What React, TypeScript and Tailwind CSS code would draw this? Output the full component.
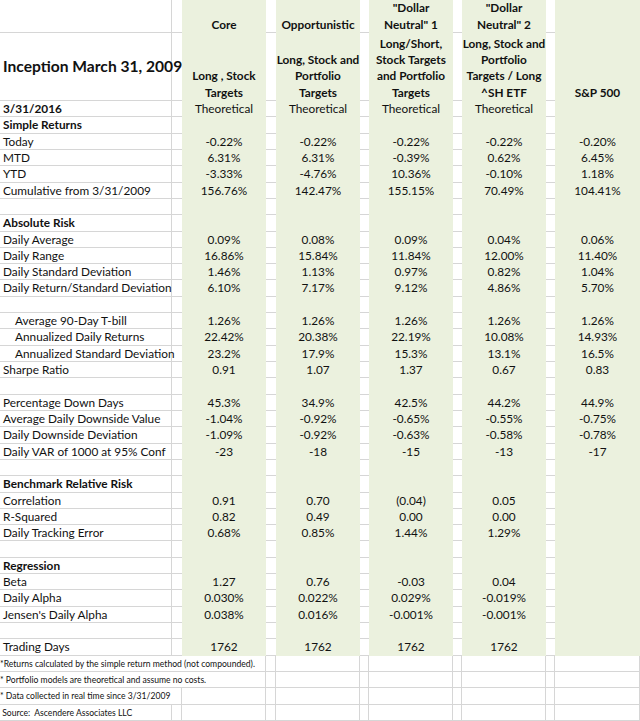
const GRID =
  "grid grid-cols-[172px_10px_84px_10px_84px_9px_84px_9px_84px_9px_85px]";
const GREEN = "bg-[#ebf1de]";
const LINE = "border-[#d6d6d6]";
const ROW_H = "h-[16.32px]";

type Kind = "normal" | "bold" | "indent" | "blank";
type Row = { label?: string; values?: string[]; kind: Kind };

const rows: Row[] = [
  { label: "3/31/2016", values: ["Theoretical", "Theoretical", "Theoretical", "Theoretical", ""], kind: "bold" },
  { label: "Simple Returns", kind: "bold" },
  { label: "Today", values: ["-0.22%", "-0.22%", "-0.22%", "-0.22%", "-0.20%"], kind: "normal" },
  { label: "MTD", values: ["6.31%", "6.31%", "-0.39%", "0.62%", "6.45%"], kind: "normal" },
  { label: "YTD", values: ["-3.33%", "-4.76%", "10.36%", "-0.10%", "1.18%"], kind: "normal" },
  { label: "Cumulative from 3/31/2009", values: ["156.76%", "142.47%", "155.15%", "70.49%", "104.41%"], kind: "normal" },
  { kind: "blank" },
  { label: "Absolute Risk", kind: "bold" },
  { label: "Daily Average", values: ["0.09%", "0.08%", "0.09%", "0.04%", "0.06%"], kind: "normal" },
  { label: "Daily Range", values: ["16.86%", "15.84%", "11.84%", "12.00%", "11.40%"], kind: "normal" },
  { label: "Daily Standard Deviation", values: ["1.46%", "1.13%", "0.97%", "0.82%", "1.04%"], kind: "normal" },
  { label: "Daily Return/Standard Deviation", values: ["6.10%", "7.17%", "9.12%", "4.86%", "5.70%"], kind: "normal" },
  { kind: "blank" },
  { label: "Average 90-Day T-bill", values: ["1.26%", "1.26%", "1.26%", "1.26%", "1.26%"], kind: "indent" },
  { label: "Annualized Daily Returns", values: ["22.42%", "20.38%", "22.19%", "10.08%", "14.93%"], kind: "indent" },
  { label: "Annualized Standard Deviation", values: ["23.2%", "17.9%", "15.3%", "13.1%", "16.5%"], kind: "indent" },
  { label: "Sharpe Ratio", values: ["0.91", "1.07", "1.37", "0.67", "0.83"], kind: "normal" },
  { kind: "blank" },
  { label: "Percentage Down Days", values: ["45.3%", "34.9%", "42.5%", "44.2%", "44.9%"], kind: "normal" },
  { label: "Average Daily Downside Value", values: ["-1.04%", "-0.92%", "-0.65%", "-0.55%", "-0.75%"], kind: "normal" },
  { label: "Daily Downside Deviation", values: ["-1.09%", "-0.92%", "-0.63%", "-0.58%", "-0.78%"], kind: "normal" },
  { label: "Daily VAR of 1000 at 95% Conf", values: ["-23", "-18", "-15", "-13", "-17"], kind: "normal" },
  { kind: "blank" },
  { label: "Benchmark Relative Risk", kind: "bold" },
  { label: "Correlation", values: ["0.91", "0.70", "(0.04)", "0.05", ""], kind: "normal" },
  { label: "R-Squared", values: ["0.82", "0.49", "0.00", "0.00", ""], kind: "normal" },
  { label: "Daily Tracking Error", values: ["0.68%", "0.85%", "1.44%", "1.29%", ""], kind: "normal" },
  { kind: "blank" },
  { label: "Regression", kind: "bold" },
  { label: "Beta", values: ["1.27", "0.76", "-0.03", "0.04", ""], kind: "normal" },
  { label: "Daily Alpha", values: ["0.030%", "0.022%", "0.029%", "-0.019%", ""], kind: "normal" },
  { label: "Jensen's Daily Alpha", values: ["0.038%", "0.016%", "-0.001%", "-0.001%", ""], kind: "normal" },
  { kind: "blank" },
  { label: "Trading Days", values: ["1762", "1762", "1762", "1762", ""], kind: "normal" },
];

function Gap({ h = ROW_H }: { h?: string }) {
  return <div className={`${h} border-b ${LINE}`} />;
}

function Green({ children, h = ROW_H }: { children?: React.ReactNode; h?: string }) {
  return (
    <div className={`${h} ${GREEN} flex items-end justify-center text-center leading-[16.32px]`}>
      <div>{children}</div>
    </div>
  );
}

function BodyRow({ row }: { row: Row }) {
  const v = row.values ?? ["", "", "", "", ""];
  const labelCls =
    row.kind === "bold" ? "font-bold pl-[3px]" : row.kind === "indent" ? "pl-[15px]" : "pl-[3px]";
  return (
    <div className={GRID}>
      <div className={`${ROW_H} border-b border-r ${LINE} ${labelCls} leading-[16px] whitespace-nowrap`}>
        {row.label}
      </div>
      <Gap />
      <Green>{v[0]}</Green>
      <Gap />
      <Green>{v[1]}</Green>
      <Gap />
      <Green>{v[2]}</Green>
      <Gap />
      <Green>{v[3]}</Green>
      <Gap />
      <Green>{v[4]}</Green>
    </div>
  );
}

function Header() {
  return (
    <>
      <div className={`${GRID} font-bold`}>
        <div className={`h-[33px] border-b border-r ${LINE}`} />
        <Gap h="h-[33px]" />
        <Green h="h-[33px]">Core</Green>
        <Gap h="h-[33px]" />
        <Green h="h-[33px]">Opportunistic</Green>
        <Gap h="h-[33px]" />
        <Green h="h-[33px]">
          "Dollar
          <br />
          Neutral" 1
        </Green>
        <Gap h="h-[33px]" />
        <Green h="h-[33px]">
          "Dollar
          <br />
          Neutral" 2
        </Green>
        <Gap h="h-[33px]" />
        <Green h="h-[33px]" />
      </div>
      <div className={`${GRID} font-bold`}>
        <div className={`h-[68px] border-b border-r ${LINE} flex items-center pl-[3px] text-[15.6px] whitespace-nowrap`}>
          Inception March 31, 2009
        </div>
        <Gap h="h-[68px]" />
        <Green h="h-[68px]">
          Long , Stock
          <br />
          Targets
        </Green>
        <Gap h="h-[68px]" />
        <Green h="h-[68px]">
          Long, Stock and
          <br />
          Portfolio
          <br />
          Targets
        </Green>
        <Gap h="h-[68px]" />
        <Green h="h-[68px]">
          Long/Short,
          <br />
          Stock Targets
          <br />
          and Portfolio
          <br />
          Targets
        </Green>
        <Gap h="h-[68px]" />
        <Green h="h-[68px]">
          Long, Stock and
          <br />
          Portfolio
          <br />
          Targets / Long
          <br />
          ^SH ETF
        </Green>
        <Gap h="h-[68px]" />
        <Green h="h-[68px]">S&amp;P 500</Green>
      </div>
    </>
  );
}

function FootCell({ span, text }: { span: string; text?: string }) {
  return (
    <div className={`${span} ${ROW_H} border-b border-r ${LINE} text-[8.6px] leading-[16px] whitespace-pre overflow-hidden`}>
      {text}
    </div>
  );
}

function Footer() {
  const rest = (n: number) => Array.from({ length: n }, (_, i) => <FootCell key={i} span="col-span-1" />);
  return (
    <>
      <div className={GRID}>
        <FootCell span="col-span-3" text="*Returns calculated by the simple return method (not compounded)." />
        {rest(8)}
      </div>
      <div className={GRID}>
        <FootCell span="col-span-3" text="* Portfolio models are theoretical and assume no costs." />
        {rest(8)}
      </div>
      <div className={GRID}>
        <FootCell span="col-span-2" text="* Data collected in real time since 3/31/2009" />
        {rest(9)}
      </div>
      <div className={GRID}>
        <FootCell span="col-span-1" text=" Source:  Ascendere Associates LLC" />
        {rest(10)}
      </div>
    </>
  );
}

export default function App() {
  return (
    <div className="w-[640px] h-[721px] overflow-hidden bg-white text-[#111111] text-[11.8px] font-['Lato',_'Liberation_Sans',_sans-serif]">
      <Header />
      {rows.map((r, i) => (
        <BodyRow key={i} row={r} />
      ))}
      <Footer />
    </div>
  );
}
